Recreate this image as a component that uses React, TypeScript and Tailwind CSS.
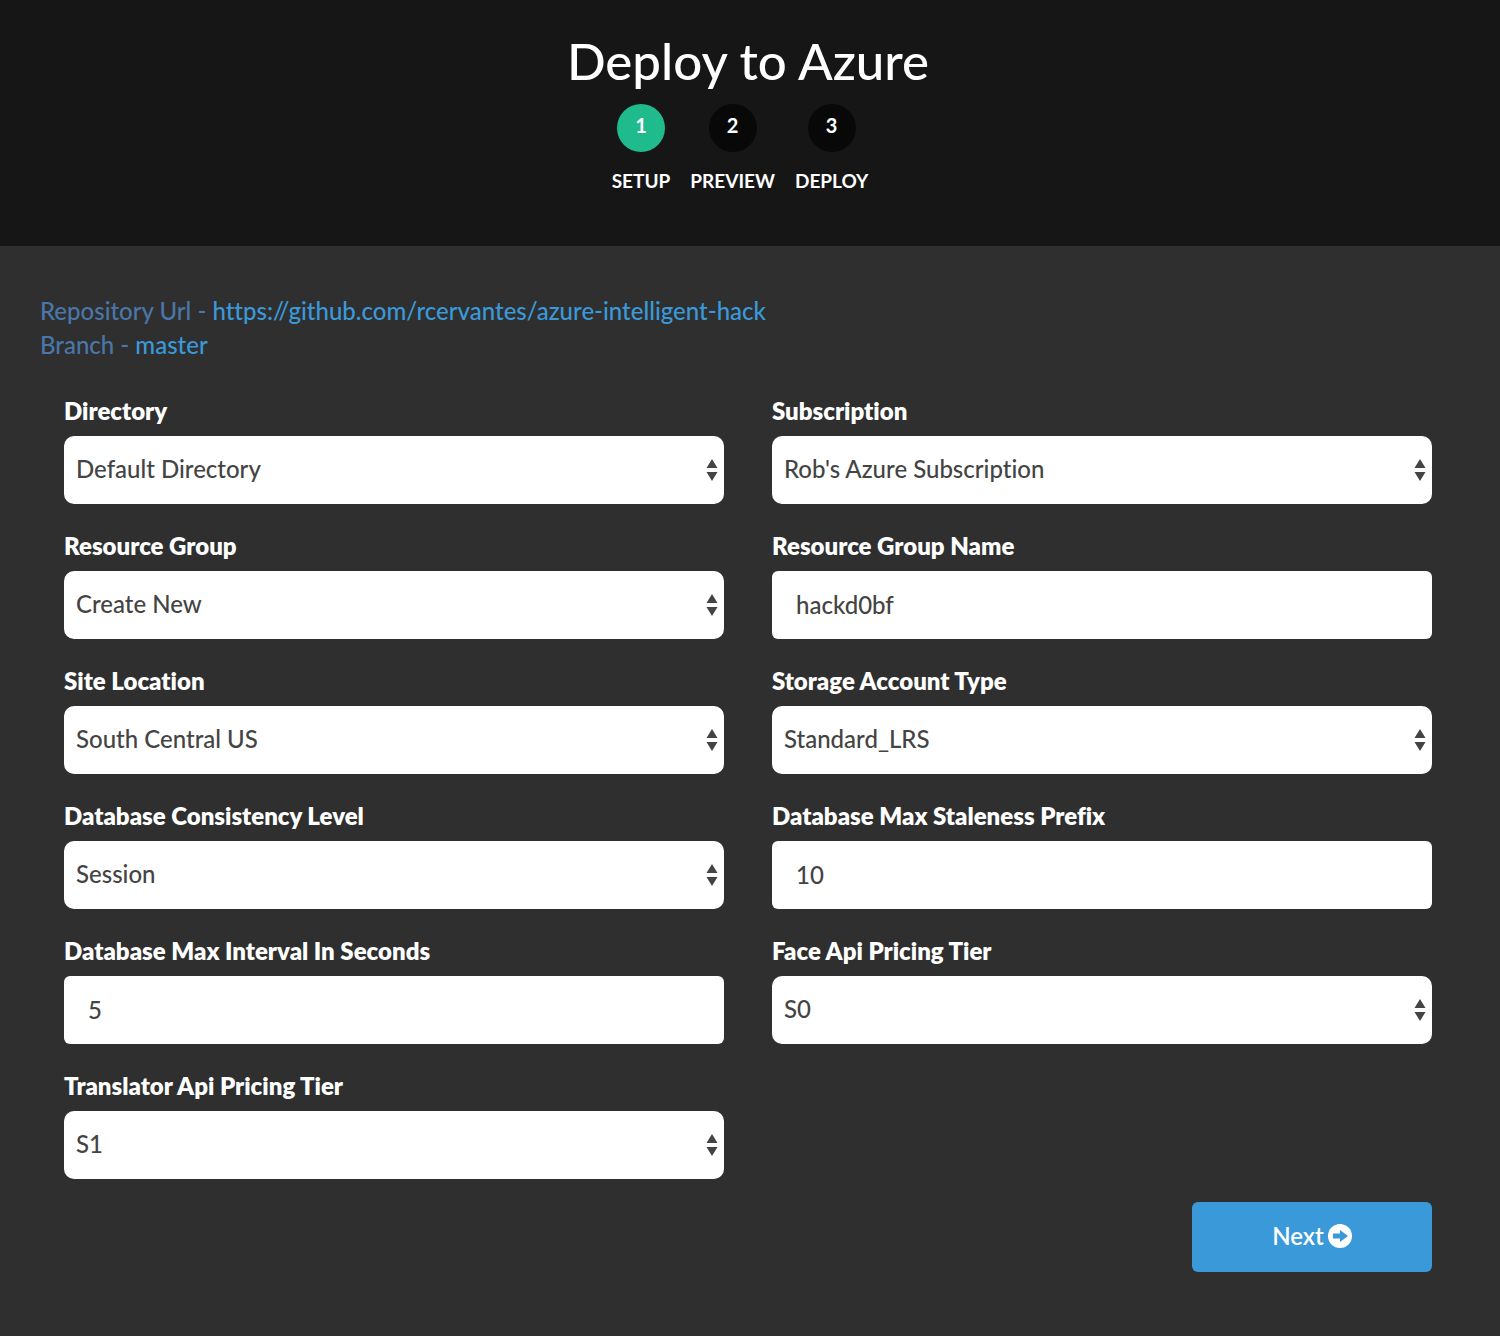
const selectArrow = (
  <svg
    className="pointer-events-none absolute right-1.5 top-1/2 h-6 w-3 -translate-y-1/2"
    viewBox="0 0 12 24"
    fill="#444"
    aria-hidden="true"
  >
    <path d="M6 1 L11.5 10 H0.5 Z M6 23 L11.5 14 H0.5 Z" />
  </svg>
);

type FieldData = { id: string; label: string; value: string; kind: "select" | "text" };

const fields: FieldData[] = [
  { id: "directory", label: "Directory", value: "Default Directory", kind: "select" },
  { id: "subscription", label: "Subscription", value: "Rob's Azure Subscription", kind: "select" },
  { id: "resource-group", label: "Resource Group", value: "Create New", kind: "select" },
  { id: "resource-group-name", label: "Resource Group Name", value: "hackd0bf", kind: "text" },
  { id: "site-location", label: "Site Location", value: "South Central US", kind: "select" },
  { id: "storage-type", label: "Storage Account Type", value: "Standard_LRS", kind: "select" },
  { id: "db-consistency", label: "Database Consistency Level", value: "Session", kind: "select" },
  { id: "db-staleness", label: "Database Max Staleness Prefix", value: "10", kind: "text" },
  { id: "db-interval", label: "Database Max Interval In Seconds", value: "5", kind: "text" },
  { id: "face-tier", label: "Face Api Pricing Tier", value: "S0", kind: "select" },
  { id: "translator-tier", label: "Translator Api Pricing Tier", value: "S1", kind: "select" },
];

function Field({ id, label, value, kind }: FieldData) {
  return (
    <div>
      <label htmlFor={id} className="block h-10 text-2xl leading-[30px] font-extrabold text-white">
        {label}
      </label>
      {kind === "select" ? (
        <div className="relative">
          <select
            id={id}
            defaultValue={value}
            className="block h-[68px] w-full appearance-none rounded-[10px] bg-white px-3 pb-0.5 text-2xl font-medium text-[#444] [font-variant-ligatures:none]"
          >
            <option>{value}</option>
          </select>
          {selectArrow}
        </div>
      ) : (
        <input
          id={id}
          type="text"
          defaultValue={value}
          className="block h-[68px] w-full rounded-md bg-white px-6 pb-0.5 text-2xl font-medium text-[#444] [font-variant-ligatures:none]"
        />
      )}
    </div>
  );
}

const steps = [
  { number: 1, name: "SETUP", circle: "bg-[#1fbb8c]" },
  { number: 2, name: "PREVIEW", circle: "bg-[#080808]" },
  { number: 3, name: "DEPLOY", circle: "bg-[#080808]" },
];

export default function App() {
  return (
    <div className="min-h-screen bg-[#2f2f2f] font-['Lato',sans-serif] font-medium [font-variant-ligatures:none]">
      <header className="flex flex-col items-center bg-[#161616] pt-[30px] pb-[50px] text-white">
        <h1 className="mr-1 text-[51px] leading-[62px]">Deploy to Azure</h1>
        <ol className="mt-3 mr-5 flex gap-5">
          {steps.map((step) => (
            <li key={step.number} className="flex flex-col items-center">
              <span
                className={`flex size-12 justify-center rounded-full pt-2 text-xl leading-[26px] font-bold ${step.circle}`}
              >
                {step.number}
              </span>
              <span className="mt-3.5 text-[19px] leading-[30px] font-bold">{step.name}</span>
            </li>
          ))}
        </ol>
      </header>
      <main className="px-10 pt-12 pb-16">
        <div className="text-2xl leading-[34px] text-[#4a76a8]">
          <p>
            Repository Url -{" "}
            <a href="https://github.com/rcervantes/azure-intelligent-hack" className="text-[#3a99d9]">
              https://github.com/rcervantes/azure-intelligent-hack
            </a>
          </p>
          <p>
            Branch -{" "}
            <a href="https://github.com/rcervantes/azure-intelligent-hack/tree/master" className="text-[#3a99d9]">
              master
            </a>
          </p>
        </div>
        <form className="mt-[34px] mr-7 ml-6" onSubmit={(event) => event.preventDefault()}>
          <div className="grid grid-cols-2 gap-x-12 gap-y-[27px]">
            {fields.map((field) => (
              <Field key={field.id} {...field} />
            ))}
          </div>
          <div className="mt-[23px] flex justify-end">
            <button
              type="submit"
              className="flex h-[70px] w-60 items-center justify-center gap-1 rounded-md bg-[#3a99d9] pb-0.5 text-2xl font-semibold text-white"
            >
              Next
              <svg className="size-6" viewBox="0 0 24 24" aria-hidden="true">
                <circle cx="12" cy="12" r="12" fill="#fff" />
                <path d="M12 6 L20 12 L12 18 V14.5 H5 V9.5 H12 Z" fill="#3a99d9" />
              </svg>
            </button>
          </div>
        </form>
      </main>
    </div>
  );
}
